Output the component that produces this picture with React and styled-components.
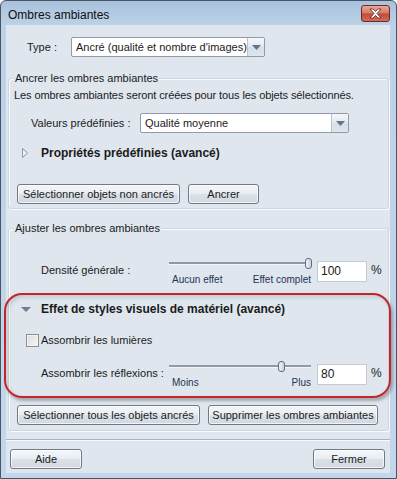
import React from 'react';
import styled, { createGlobalStyle } from 'styled-components';

const GlobalStyle = createGlobalStyle`
  html, body {
    margin: 0;
    padding: 0;
    background: #ffffff;
  }
  body {
    font-family: "Liberation Sans", Arial, sans-serif;
    font-size: 11px;
    color: #1b1b1b;
  }
`;

const Window = styled.div`
  box-sizing: border-box;
  width: 397px;
  height: 479px;
  border: 1px solid #4a5460;
  border-radius: 6px 6px 0 0;
  background: linear-gradient(#a9c2dc 0px, #bcd2e8 25px, #c3d7ec 100%);
  display: flex;
  flex-direction: column;
  padding: 0 6px 5px 5px;
`;

const TitleBar = styled.div`
  height: 24px;
  display: flex;
  align-items: flex-start;
  margin: 0 -6px 0 -5px;
  padding-left: 7px;
`;

const TitleText = styled.div`
  font-size: 12px;
  line-height: 14px;
  margin-top: 7px;
  color: #101010;
`;

const CloseButton = styled.div`
  margin-left: auto;
  margin-right: 6px;
  margin-top: 4px;
  width: 29px;
  height: 17px;
  box-sizing: border-box;
  border: 1px solid #6b2b2b;
  border-radius: 3px;
  background: linear-gradient(#e9a99c 0%, #d77a68 45%, #c44a35 55%, #d0705a 100%);
  display: flex;
  align-items: center;
  justify-content: center;
`;

const Client = styled.div`
  flex: 1;
  background: #dfe6ee;
  display: flex;
  flex-direction: column;
  padding: 0 1px 0 2px;
`;

const Row = styled.div`
  display: flex;
  align-items: center;
  margin-top: ${p => p.$top || 0}px;
  padding-left: ${p => p.$left || 0}px;
  gap: ${p => p.$gap || 0}px;
`;

const Label = styled.div`
  width: ${p => p.$width ? `${p.$width}px` : 'auto'};
  line-height: 14px;
  white-space: nowrap;
`;

const Select = styled.div`
  box-sizing: border-box;
  width: ${p => p.$width}px;
  height: 20px;
  border: 1px solid #8f9bab;
  border-radius: 2px;
  background: #fff;
  display: flex;
  align-items: stretch;
`;

const SelectValue = styled.div`
  flex: 1;
  padding-left: 4px;
  line-height: 18px;
  white-space: nowrap;
  overflow: hidden;
`;

const SelectArrow = styled.div`
  width: 16px;
  border-left: 1px solid #b9c5d1;
  background: linear-gradient(#f5f7fa, #e3e9ef 50%, #d6dee7 51%, #dfe5ec);
  display: flex;
  align-items: center;
  justify-content: center;
`;

const GroupBox = styled.div`
  margin-top: ${p => p.$top}px;
  border: 1px solid #cdd6df;
  border-radius: 3px;
  box-shadow: inset 1px 1px 0 #f9fbfc, 1px 1px 0 #f9fbfc;
  padding-bottom: ${p => p.$bottom}px;
  display: flex;
  flex-direction: column;
`;

const Legend = styled.div`
  align-self: flex-start;
  margin: -8px 0 0 5px;
  padding: 0 1px;
  line-height: 14px;
  background: #dfe6ee;
`;

const Text = styled.div`
  margin-top: ${p => p.$top || 0}px;
  padding-left: ${p => p.$left || 0}px;
  line-height: 14px;
  letter-spacing: -0.1px;
  white-space: nowrap;
`;

const Expander = styled.div`
  display: flex;
  align-items: center;
  height: 16px;
  margin-top: ${p => p.$top}px;
  padding-left: ${p => p.$left}px;
`;

const ExpanderIcon = styled.div`
  width: ${p => p.$gap}px;
  display: flex;
  align-items: center;
`;

const BoldText = styled.div`
  font-weight: bold;
  font-size: 12px;
  line-height: 14px;
  white-space: nowrap;
`;

const Button = styled.div`
  box-sizing: border-box;
  width: ${p => p.$width}px;
  height: 20px;
  border: 1px solid #707a86;
  border-radius: 3px;
  background: linear-gradient(#f4f6f9 0%, #e9edf2 48%, #dbe1e8 52%, #d0d8e1 100%);
  box-shadow: inset 0 0 0 1px rgba(255, 255, 255, 0.7);
  display: flex;
  align-items: center;
  justify-content: center;
  line-height: 14px;
  white-space: nowrap;
`;

const SliderRow = styled.div`
  display: flex;
  align-items: flex-start;
  margin-top: ${p => p.$top}px;
  padding-left: ${p => p.$left}px;
  height: 28px;
`;

const SliderLabel = styled.div`
  width: 128px;
  margin-top: 5px;
  line-height: 14px;
  white-space: nowrap;
`;

const Slider = styled.div`
  width: 142px;
  display: flex;
  flex-direction: column;
`;

const TrackArea = styled.div`
  position: relative;
  height: 11px;
  display: flex;
  align-items: center;
`;

const Track = styled.div`
  flex: 1;
  height: 2px;
  background: #8e9aa8;
  border-bottom: 1px solid #f4f7fa;
`;

const Thumb = styled.div`
  position: absolute;
  top: 0;
  left: ${p => p.$left}px;
  box-sizing: border-box;
  width: 7px;
  height: 11px;
  border: 1px solid #5f6d7d;
  border-radius: 3px;
  background: linear-gradient(90deg, #eef2f6, #c9d2dc);
`;

const TickLabels = styled.div`
  display: flex;
  justify-content: space-between;
  margin-top: 5px;
  padding-left: 3px;
  font-size: 10px;
  line-height: 12px;
  color: #1e3554;
  white-space: nowrap;
`;

const NumberInput = styled.div`
  box-sizing: border-box;
  width: 50px;
  height: 21px;
  margin: 3px 0 0 6px;
  border: 1px solid #c3ccd6;
  background: #fff;
  padding-left: 3px;
  line-height: 18px;
  font-size: 12px;
`;

const Percent = styled.div`
  margin: 5px 0 0 4px;
  line-height: 14px;
  font-size: 12px;
`;

const Highlight = styled.div`
  margin: ${p => p.$top}px -3px 0 -5px;
  border: 2px solid #c0262c;
  border-radius: 18px;
  box-shadow: 2px 3px 3px rgba(60, 60, 60, 0.35), inset 2px 2px 4px rgba(0, 0, 0, 0.14);
  padding-bottom: 7px;
  display: flex;
  flex-direction: column;
`;

const Checkbox = styled.div`
  box-sizing: border-box;
  width: 13px;
  height: 13px;
  border: 1px solid #8e8f8f;
  background: linear-gradient(135deg, #dcdcdc, #f6f6f6);
  box-shadow: inset 0 0 0 1px #f4f4f4;
`;

const Separator = styled.div`
  margin: ${p => p.$top}px -1px 0 -2px;
  height: 1px;
  background: #a7b3c0;
  border-bottom: 1px solid #f7f9fb;
`;

const Footer = styled.div`
  display: flex;
  justify-content: space-between;
  margin-top: 8px;
  padding: 0 4px 0 2px;
`;

const RightTriangle = () => (
  <svg width="6" height="10" viewBox="0 0 6 10">
    <path d="M0.5 0.5 L5.5 5 L0.5 9.5 Z" fill="#eef2f5" stroke="#8c9aa8" />
  </svg>
);

const DownTriangle = () => (
  <svg width="10" height="5" viewBox="0 0 10 5">
    <path d="M0 0 L10 0 L5 5 Z" fill="#6b7f96" />
  </svg>
);

const SelectTriangle = () => (
  <svg width="9" height="5" viewBox="0 0 9 5">
    <path d="M0 0 L9 0 L4.5 5 Z" fill="#60748c" />
  </svg>
);

const CloseIcon = () => (
  <svg width="13" height="11" viewBox="0 0 13 11">
    <path
      d="M1 1 L4 1 L6.5 3.5 L9 1 L12 1 L8 5.5 L12 10 L9 10 L6.5 7.5 L4 10 L1 10 L5 5.5 Z"
      fill="#ffffff"
      stroke="#5a2424"
      strokeWidth="0.8"
    />
  </svg>
);

const SliderField = ({ label, left, top, thumb, min, max, value }) => (
  <SliderRow $top={top} $left={left}>
    <SliderLabel>{label}</SliderLabel>
    <Slider>
      <TrackArea>
        <Track />
        <Thumb $left={thumb} />
      </TrackArea>
      <TickLabels>
        <span>{min}</span>
        <span>{max}</span>
      </TickLabels>
    </Slider>
    <NumberInput>{value}</NumberInput>
    <Percent>%</Percent>
  </SliderRow>
);

export default function App() {
  return (
    <>
      <GlobalStyle />
      <Window>
        <TitleBar>
          <TitleText>Ombres ambiantes</TitleText>
          <CloseButton>
            <CloseIcon />
          </CloseButton>
        </TitleBar>
        <Client>
          <Row $top={12} $left={19}>
            <Label $width={44}>Type :</Label>
            <Select $width={194}>
              <SelectValue>Ancré (qualité et nombre d'images)</SelectValue>
              <SelectArrow><SelectTriangle /></SelectArrow>
            </Select>
          </Row>

          <GroupBox $top={21} $bottom={4}>
            <Legend>Ancrer les ombres ambiantes</Legend>
            <Text $top={3} $left={5}>
              Les ombres ambiantes seront créées pour tous les objets sélectionnés.
            </Text>
            <Row $top={11} $left={22}>
              <Label $width={109}>Valeurs prédéfinies :</Label>
              <Select $width={209}>
                <SelectValue>Qualité moyenne</SelectValue>
                <SelectArrow><SelectTriangle /></SelectArrow>
              </Select>
            </Row>
            <Expander $top={12} $left={13}>
              <ExpanderIcon $gap={19}><RightTriangle /></ExpanderIcon>
              <BoldText>Propriétés prédéfinies (avancé)</BoldText>
            </Expander>
            <Row $top={23} $left={8} $gap={8}>
              <Button $width={163}>Sélectionner objets non ancrés</Button>
              <Button $width={71}>Ancrer</Button>
            </Row>
          </GroupBox>

          <GroupBox $top={19} $bottom={5}>
            <Legend>Ajuster les ombres ambiantes</Legend>
            <SliderField
              label="Densité générale :"
              left={32}
              top={23}
              thumb={136}
              min="Aucun effet"
              max="Effet complet"
              value="100"
            />
            <Highlight $top={7}>
              <Expander $top={6} $left={15}>
                <ExpanderIcon $gap={20}><DownTriangle /></ExpanderIcon>
                <BoldText>Effet de styles visuels de matériel (avancé)</BoldText>
              </Expander>
              <Row $top={16} $left={20} $gap={2}>
                <Checkbox />
                <Label>Assombrir les lumières</Label>
              </Row>
              <SliderField
                label="Assombrir les réflexions :"
                left={35}
                top={14}
                thumb={109}
                min="Moins"
                max="Plus"
                value="80"
              />
            </Highlight>
            <Row $top={7} $left={8} $gap={8}>
              <Button $width={183}>Sélectionner tous les objets ancrés</Button>
              <Button $width={170}>Supprimer les ombres ambiantes</Button>
            </Row>
          </GroupBox>

          <Separator $top={8} />
          <Footer>
            <Button $width={72}>Aide</Button>
            <Button $width={72}>Fermer</Button>
          </Footer>
        </Client>
      </Window>
    </>
  );
}
